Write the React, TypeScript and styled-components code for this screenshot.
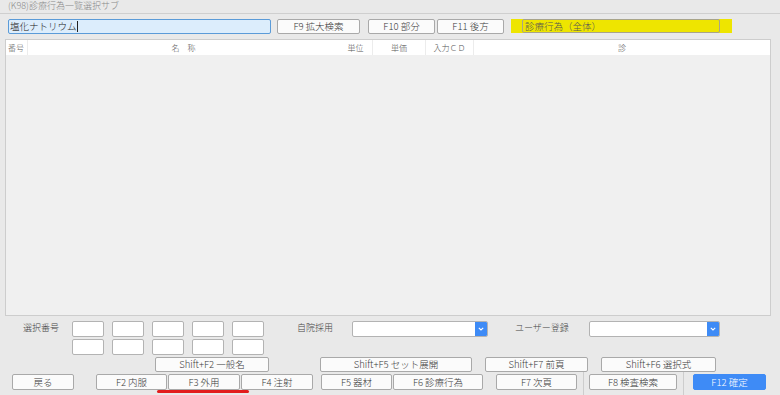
import React, { FC } from "react";
import styled, { createGlobalStyle } from "styled-components";

const GlobalStyle = createGlobalStyle`
  html, body {
    margin: 0;
    padding: 0;
    background: #e9e9e9;
  }
  * {
    box-sizing: border-box;
  }
`;

const Page = styled.div`
  position: relative;
  width: 780px;
  height: 395px;
  overflow: hidden;
  background: #e9e9e9;
  font-family: "Noto Sans CJK JP", "Noto Sans", sans-serif;
  font-weight: 300;
  color: #3a3a3a;
`;

const TitleBar = styled.div`
  height: 14px;
  padding-left: 8px;
  border-bottom: 1px solid #cfcfcf;
  font-size: 9px;
  line-height: 12px;
  color: #8a8a8a;
`;

const Row = styled.div<{ $top: number; $left?: number; $h?: number }>`
  display: flex;
  align-items: flex-start;
  margin-top: ${(p) => p.$top}px;
  padding-left: ${(p) => p.$left ?? 0}px;
  height: ${(p) => p.$h ?? 15}px;
`;

const SearchBox = styled.div`
  width: 263px;
  height: 15px;
  background: #dcedfc;
  border: 1px solid #5b9bd8;
  border-radius: 2px;
  font-size: 9.5px;
  line-height: 13px;
  padding-left: 1px;
  color: #222;
  display: flex;
  align-items: center;
`;

const Caret = styled.span`
  display: inline-block;
  width: 1px;
  height: 11px;
  background: #222;
`;

const Button = styled.div<{ $w: number; $ml?: number; $h?: number; $primary?: boolean }>`
  flex: none;
  width: ${(p) => p.$w}px;
  height: ${(p) => p.$h ?? 15}px;
  margin-left: ${(p) => p.$ml ?? 0}px;
  background: ${(p) => (p.$primary ? "#3e8bf6" : "#fbfbfb")};
  border: 1px solid ${(p) => (p.$primary ? "#3e8bf6" : "#a9a9a9")};
  border-radius: 2px;
  color: ${(p) => (p.$primary ? "#fff" : "#3a3a3a")};
  font-size: 9.5px;
  line-height: ${(p) => (p.$h ?? 15) - 2}px;
  text-align: center;
  white-space: nowrap;
`;

const Highlight = styled.div`
  margin-left: 7px;
  width: 221px;
  height: 14px;
  background: #eee500;
  padding-left: 11px;
`;

const ScopeBox = styled.div`
  width: 198px;
  height: 14px;
  border: 1px solid #a8a48a;
  border-radius: 2px;
  font-size: 9.5px;
  line-height: 12px;
  padding-left: 2px;
  color: #555;
`;

const Table = styled.div`
  margin: 5px 0 0 5px;
  width: 766px;
  height: 277px;
  border: 1px solid #cdcdcd;
  background: #f0f0f0;
`;

const HeaderRow = styled.div`
  display: flex;
  height: 15px;
  background: #fff;
`;

const HeaderCell = styled.div<{ $w?: number; $left?: boolean; $line?: boolean }>`
  flex: ${(p) => (p.$w ? "none" : "1")};
  width: ${(p) => (p.$w ? `${p.$w}px` : "auto")};
  text-align: ${(p) => (p.$left ? "left" : "center")};
  padding-left: ${(p) => (p.$left ? 2 : 0)}px;
  font-size: 8px;
  line-height: 15px;
  color: #555;
  border-right: ${(p) => (p.$line ? "1px solid #ececec" : "none")};
`;

const Label = styled.div<{ $w: number; $ml?: number }>`
  flex: none;
  width: ${(p) => p.$w}px;
  margin-left: ${(p) => p.$ml ?? 0}px;
  font-size: 9px;
  line-height: 13px;
  color: #444;
`;

const NumBox = styled.div<{ $ml?: number }>`
  flex: none;
  width: 32px;
  height: 16px;
  margin-left: ${(p) => p.$ml ?? 8}px;
  background: #fff;
  border: 1px solid #b3b3b3;
  border-radius: 2px;
`;

const Select = styled.div<{ $w: number; $ml?: number }>`
  flex: none;
  display: flex;
  width: ${(p) => p.$w}px;
  height: 16px;
  margin-left: ${(p) => p.$ml ?? 0}px;
  background: #fff;
  border: 1px solid #b3b3b3;
  border-radius: 2px;
  overflow: hidden;
`;

const SelectArrow = styled.div`
  margin-left: auto;
  width: 12px;
  height: 100%;
  background: #3e8bf6;
  display: flex;
  align-items: center;
  justify-content: center;
`;

const Divider = styled.div<{ $ml: number }>`
  flex: none;
  width: 1px;
  height: 24px;
  margin-top: -2px;
  margin-left: ${(p) => p.$ml}px;
  background: #cdcdcd;
`;

const Annotation = styled.div`
  position: absolute;
  left: 157px;
  top: 390px;
  width: 92px;
  height: 3px;
  border-radius: 2px;
  background: #e21d1d;
`;

const Chevron: FC = () => (
  <svg width="6" height="4" viewBox="0 0 6 4">
    <path d="M0.8 0.8 L3 3 L5.2 0.8" stroke="#fff" strokeWidth="1.1" fill="none" />
  </svg>
);

const DropDown: FC<{ w: number; ml: number }> = ({ w, ml }) => (
  <Select $w={w} $ml={ml}>
    <SelectArrow>
      <Chevron />
    </SelectArrow>
  </Select>
);

const NumBoxes: FC = () => (
  <>
    <NumBox $ml={0} />
    <NumBox />
    <NumBox />
    <NumBox />
    <NumBox />
  </>
);

export default function App() {
  return (
    <Page>
      <GlobalStyle />
      <TitleBar>(K98)診療行為一覧選択サブ</TitleBar>

      <Row $top={5} $left={8}>
        <SearchBox>
          塩化ナトリウム
          <Caret />
        </SearchBox>
        <Button $w={83} $ml={6}>F9 拡大検索</Button>
        <Button $w={67} $ml={8}>F10 部分</Button>
        <Button $w={67} $ml={2}>F11 後方</Button>
        <Highlight>
          <ScopeBox>診療行為（全体）</ScopeBox>
        </Highlight>
      </Row>

      <Table>
        <HeaderRow>
          <HeaderCell $w={22} $left $line>番号</HeaderCell>
          <HeaderCell $w={311}>名　称</HeaderCell>
          <HeaderCell $w={34} $line>単位</HeaderCell>
          <HeaderCell $w={53} $line>単価</HeaderCell>
          <HeaderCell $w={48} $line>入力ＣＤ</HeaderCell>
          <HeaderCell>診</HeaderCell>
        </HeaderRow>
      </Table>

      <Row $top={5} $left={23} $h={16}>
        <Label $w={49}>選択番号</Label>
        <NumBoxes />
        <Label $w={50} $ml={33}>自院採用</Label>
        <DropDown w={136} ml={5} />
        <Label $w={60} $ml={27}>ユーザー登録</Label>
        <DropDown w={131} ml={14} />
      </Row>

      <Row $top={2} $left={72} $h={16}>
        <NumBoxes />
      </Row>

      <Row $top={2} $left={155}>
        <Button $w={114}>Shift+F2 一般名</Button>
        <Button $w={152} $ml={51}>Shift+F5 セット展開</Button>
        <Button $w={103} $ml={13}>Shift+F7 前頁</Button>
        <Button $w={115} $ml={13}>Shift+F6 選択式</Button>
      </Row>

      <Row $top={2} $left={12} $h={16}>
        <Button $w={62} $h={16}>戻る</Button>
        <Button $w={71} $h={16} $ml={22}>F2 内服</Button>
        <Button $w={72} $h={16} $ml={1}>F3 外用</Button>
        <Button $w={72} $h={16} $ml={1}>F4 注射</Button>
        <Button $w={71} $h={16} $ml={8}>F5 器材</Button>
        <Button $w={90} $h={16} $ml={1}>F6 診療行為</Button>
        <Button $w={81} $h={16} $ml={13}>F7 次頁</Button>
        <Divider $ml={6} />
        <Button $w={88} $h={16} $ml={5}>F8 検査検索</Button>
        <Divider $ml={6} />
        <Button $w={73} $h={16} $ml={9} $primary>F12 確定</Button>
      </Row>

      <Annotation />
    </Page>
  );
}
